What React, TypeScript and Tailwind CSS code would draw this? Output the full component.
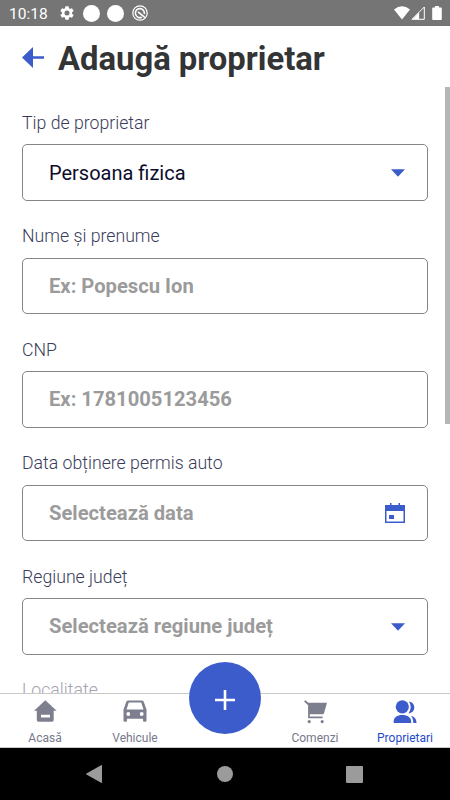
import type { ReactNode } from "react";

type FieldProps = {
  label: string;
  text: string;
  filled?: boolean;
  icon?: ReactNode;
};

type TabProps = {
  label: string;
  icon: ReactNode;
  active?: boolean;
};

const Caret = () => (
  <svg viewBox="0 0 14 8" className="mr-px h-2 w-3.5 fill-[#3d5ccc]">
    <path d="M0 .3h14L7 7.800z" />
  </svg>
);

const CalendarIcon = () => (
  <svg viewBox="0 0 20 20" className="mr-px h-5 w-5 fill-[#3d5ccc]">
    <path fillRule="evenodd" d="M0 2h5V0h1.500v2h7V0H15v2h5v18H0zM1.500 8v10.500h17V8zM4 12h5v4H4z" />
  </svg>
);

const HomeIcon = () => (
  <svg viewBox="0 0 24 22" className="h-[22px] w-6 fill-current">
    <path fillRule="evenodd" d="M12.300 .3 23.700 10.800h-3V20q0 1.700-1.700 1.700H5.500Q3.800 21.700 3.800 20v-9.200H1zM8 14.800v2.600h9v-2.600z" />
  </svg>
);

const CarIcon = () => (
  <svg viewBox="0 0 24 22" className="h-[22px] w-6 fill-current">
    <path
      fillRule="evenodd"
      d="M5.300 .4h13.400q1.500 0 2 1.300L23.500 9.400v11q0 1.300-1.300 1.300h-1q-1.200 0-1.200-1.300v-1.700H4v1.700q0 1.300-1.200 1.300h-1Q.5 21.700.5 20.400v-11l2.800-7.700Q3.800.4 5.300.4zm.5 2L3.500 9.400h17l-2.300-7zM5.300 12.100a1.900 1.900 0 1 0 0 3.800 1.900 1.900 0 0 0 0-3.800zm13.400 0a1.900 1.900 0 1 0 0 3.800 1.900 1.900 0 0 0 0-3.800z"
    />
  </svg>
);

const CartIcon = () => (
  <svg viewBox="0 0 24 24" className="h-6 w-6 fill-current">
    <path d="m1 1.500 1.500-1.300L5.300 2.800H24L21 13.300q-.3 1-1.300 1H6.800v2.200h12.700v1.700H5.100V5.200zM6.200 20a1.600 1.600 0 1 1 0 3.200 1.600 1.600 0 0 1 0-3.200zm13 0a1.600 1.600 0 1 1 0 3.200 1.600 1.600 0 0 1 0-3.200z" />
  </svg>
);

const PeopleIcon = () => (
  <svg viewBox="0 0 24 24" className="h-6 w-6 fill-current">
    <circle cx="9.300" cy="6.800" r="6.600" />
    <path d="M.7 23v-1.500C.7 17.500 4 15 9.300 15s8.900 2.500 8.900 6.500V23zM15.600 13.300q4.200-6 .3-11.800c3.400.5 5.400 3 5.400 6 0 3.300-2.500 5.800-5.700 5.800zM18 16c3.500.8 5.500 3 5.500 7h-3.300c.2-3-.5-5-2.200-7z" />
  </svg>
);

function Field({ label, text, filled, icon }: FieldProps) {
  return (
    <div className="h-[113.5px] shrink-0">
      <div className="mb-[10.800px] h-[22px] text-[17.700px] leading-[22px] font-light whitespace-nowrap text-[#3a3c5c]">
        <span>{label}</span>
      </div>
      <div className="flex h-[56.700px] items-center justify-between rounded-[5px] border border-[#858585] pr-[21px] pl-[26px]">
        <span
          className={
            filled
              ? "text-[20px] whitespace-nowrap text-[#0c0c2c]"
              : "text-[20.200px] font-bold whitespace-nowrap text-[#9b9b9b]"
          }
        >
          {text}
        </span>
        {icon}
      </div>
    </div>
  );
}

function Tab({ label, icon, active }: TabProps) {
  return (
    <button
      className={`flex w-[90px] flex-col items-center pt-1.5 ${active ? "text-[#3d5ccc]" : "text-[#7d7f8e]"}`}
    >
      <span className="flex h-6 items-start">{icon}</span>
      <span className={`mt-1.5 text-[12px] leading-4 ${active ? "text-[#1f49cc]" : "text-[#76788a]"}`}>
        {label}
      </span>
    </button>
  );
}

function StatusBar() {
  return (
    <div className="flex h-[26px] shrink-0 items-center bg-[#757575] pl-[9px] text-white">
      <span className="w-[51px] pt-[2px] text-[15.500px] leading-5">10:18</span>
      <svg viewBox="2 2 20 20" className="h-[14px] w-[14px] fill-current">
        <path d="M19.140 12.940c.04-.3.06-.61.060-.94s-.02-.64-.07-.94l2.030-1.580a.49.490 0 0 0 .12-.61l-1.920-3.320a.49.490 0 0 0-.59-.22l-2.390.96a7 7 0 0 0-1.620-.94l-.36-2.540a.48.480 0 0 0-.48-.41h-3.840a.48.480 0 0 0-.47.410l-.36 2.540a7 7 0 0 0-1.620.940l-2.390-.96a.48.480 0 0 0-.59.220L2.740 8.870a.48.480 0 0 0 .12.610l2.030 1.580a6 6 0 0 0 0 1.880l-2.030 1.580a.49.490 0 0 0-.12.610l1.920 3.320c.12.220.37.290.59.220l2.390-.96a7 7 0 0 0 1.620.940l.36 2.540c.05.240.24.410.48.410h3.840c.24 0 .44-.17.470-.41l.36-2.540a7 7 0 0 0 1.620-.94l2.390.960c.22.080.47 0 .59-.22l1.920-3.320a.48.480 0 0 0-.12-.61zM12 15.600a3.600 3.600 0 1 1 0-7.200 3.600 3.600 0 0 1 0 7.200z" />
      </svg>
      <span className="ml-[9px] h-[17px] w-[17px] rounded-full bg-white" />
      <span className="ml-[7px] h-[17px] w-[17px] rounded-full bg-white" />
      <svg viewBox="0 0 16 16" className="ml-[8px] h-4 w-4 fill-none stroke-current">
        <circle cx="8" cy="8" r="7.200" strokeWidth="1.200" />
        <path d="M6 6.800 12.800 12.300M9.800 12.200A4.500 4.500 0 1 1 12.300 9" strokeWidth="1.600" />
      </svg>
      <div className="ml-auto flex items-center pr-2">
        <svg viewBox="0 0 16 14" className="h-3.5 w-4 fill-current">
          <path d="M8 13.500 0 3.500q8-6.500 16 0z" />
        </svg>
        <svg viewBox="0 0 14 14" className="ml-[1px] h-3.5 w-3.5">
          <path d="M13.300 1v12.300H1z" className="fill-[#9a9a9a] stroke-white" />
          <path d="M8 6.500v6.500H2z" className="fill-white" />
          <path d="M8.500 6.500v6h4v-10z" className="fill-[#757575]" />
        </svg>
        <svg viewBox="0 0 10 14" className="ml-[7px] h-3.5 w-[10px] fill-current">
          <path d="M3 0h4v1.400h2q.8 0 .8.800v11q0 .8-.8.800H1q-.8 0-.8-.8v-11q0-.8.8-.8h2z" />
        </svg>
      </div>
    </div>
  );
}

export default function App() {
  return (
    <div className="flex h-[800px] w-[450px] flex-col overflow-hidden bg-white font-['Roboto',sans-serif]">
      <StatusBar />

      <header className="flex h-[61px] shrink-0 items-center pl-[22px]">
        <svg viewBox="0 0 22 21" className="mt-0.5 h-[21px] w-[22px] fill-[#3d5ccc]">
          <path d="M0 10.500 11 0v9.200h11v2.600H11V21z" />
        </svg>
        <h1 className="ml-[14px] pt-[5px] text-[32.800px] leading-[40px] font-bold whitespace-nowrap text-[#333435]">
          <span>Adaugă proprietar</span>
        </h1>
      </header>

      <main className="flex min-h-0 flex-1 justify-between overflow-hidden">
        <div className="flex w-[428px] flex-col pt-[24.500px] pl-[22px]">
          <Field label="Tip de proprietar" text="Persoana fizica" filled icon={<Caret />} />
          <Field label="Nume și prenume" text="Ex: Popescu Ion" />
          <Field label="CNP" text="Ex: 1781005123456" />
          <Field label="Data obținere permis auto" text="Selectează data" icon={<CalendarIcon />} />
          <Field label="Regiune județ" text="Selectează regiune județ" icon={<Caret />} />
          <div className="text-[17.700px] leading-[22px] font-light text-[#a3a3ae]">
            <span>Localitate</span>
          </div>
        </div>
        <div className="h-[337px] w-[5px] bg-[#b5b6b6]" />
      </main>

      <nav className="relative flex h-[55px] shrink-0 justify-between border-t border-b border-[#c9c9c9] bg-white">
        <Tab label="Acasă" icon={<HomeIcon />} />
        <Tab label="Vehicule" icon={<CarIcon />} />
        <div className="w-[90px]" />
        <Tab label="Comenzi" icon={<CartIcon />} />
        <Tab label="Proprietari" icon={<PeopleIcon />} active />
        <button className="absolute -top-[32px] left-[189px] flex h-[72px] w-[72px] items-center justify-center rounded-full bg-[#3d5ccc]">
          <svg viewBox="0 0 20 20" className="mt-1 h-5 w-5 fill-white">
            <path d="M8.700 0h2.600v8.700H20v2.600h-8.700V20H8.700v-8.700H0V8.700h8.700z" />
          </svg>
        </button>
      </nav>

      <div className="flex h-[52px] shrink-0 items-center justify-between bg-black pr-[87px] pl-[86px]">
        <svg viewBox="0 0 16 18" className="h-[18px] w-4 fill-[#9b9b9b]">
          <path d="M15 .2q1-.5 1 .6v16.400q0 1.100-1 .6L.5 9.600Q-.3 9 .5 8.400z" />
        </svg>
        <span className="ml-px h-4 w-4 rounded-full bg-[#9b9b9b]" />
        <span className="h-[17px] w-[17px] rounded-[1px] bg-[#9b9b9b]" />
      </div>
    </div>
  );
}
